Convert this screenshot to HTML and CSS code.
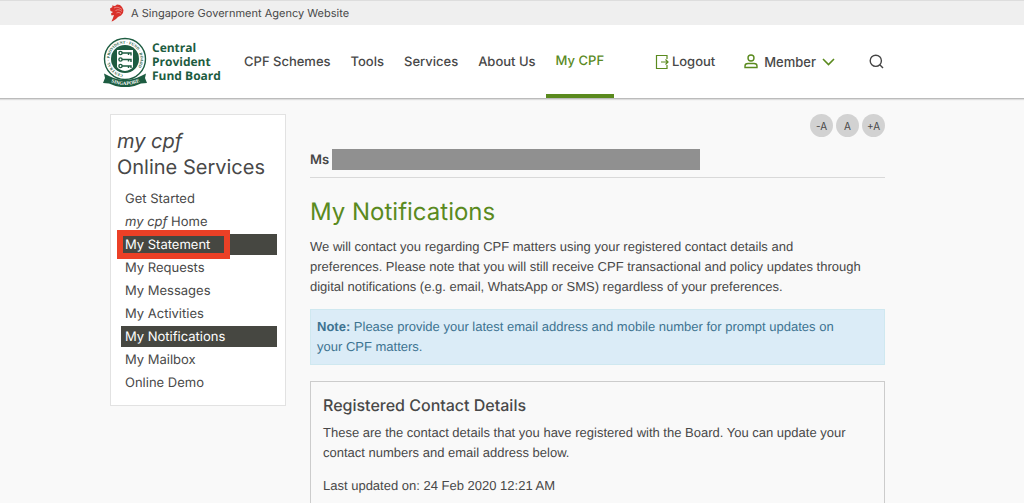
FILE: index.html
```html
<!DOCTYPE html>
<html lang="en">
<head>
  <meta charset="UTF-8" />
  <title>My Notifications</title>
  <meta name="viewport" content="width=device-width, initial-scale=1.0" />
  <link rel="stylesheet" href="styles.css">
</head>
<body>
  <div class="gov-bar">
    <svg class="lion" width="16" height="18" viewBox="0 0 16 18" aria-hidden="true">
      <path fill="#d9302a" d="M1 4.500 3.500 3 3 1.500 6 2 8 .5l3 .5 2 2 1.500 3-.5 3-2 2.500-3 1.500-2 2-3 2-1.500.5L4 14l1-3-2.500.5L2 9.500l2-1.500-2.500-1z" />
      <path fill="none" stroke="#f7cfcb" stroke-width=".5" d="M5 4c3-1.500 5-.5 8 1.500M6.500 6.500c3-1.500 4.500-.5 6.500 1M7.500 9c2-1 3-.5 4.500.5" />
    </svg>
    <span>A Singapore Government Agency Website</span>
  </div>

  <header class="header">
    <a href="#" class="logo">
      <svg width="44" height="50" viewBox="0 0 44 50" aria-hidden="true">
        <defs>
          <path id="ring" d="M20 37.400A15.500 15.500 0 1 1 24 37.400" />
          <path id="ribbon" d="M8 45Q22 51 36 45" />
        </defs>
        <circle cx="22" cy="22" r="20.500" fill="#fff" stroke="#1d5c41" stroke-width="1.400" />
        <circle cx="22" cy="22" r="14" fill="#1d5c41" />
        <path fill="#fff" d="M14 13h16v17q-2 3-8 4-6-1-8-4z" />
        <g fill="none" stroke="#1d5c41" stroke-width="1.400">
          <circle cx="17.500" cy="16" r="1.600" />
          <circle cx="17.500" cy="22.500" r="1.600" />
          <circle cx="17.500" cy="29" r="1.600" />
          <path d="M19 16h9v2.500M19 22.500h9V25M19 29h9v2M25.500 16v2M25.500 22.500v2M25.500 29v2" />
        </g>
        <text class="seal"><textPath href="#ring">CENTRAL · PROVIDENT · FUND · BOARD</textPath></text>
        <path fill="#1d5c41" d="M1 36.500l5 2.500q16 8 32 0l5-2.500-1 4.500 2 5-6 .5Q22 54 6 46.500L0 46l2-5z" />
        <text class="seal seal-name"><textPath href="#ribbon">SINGAPORE</textPath></text>
      </svg>
      <span>Central<br>Provident<br>Fund Board</span>
    </a>
    <nav class="nav">
      <a href="#">CPF Schemes</a>
      <a href="#">Tools</a>
      <a href="#">Services</a>
      <a href="#">About Us</a>
      <a href="#" class="current">My CPF</a>
    </nav>
    <div class="account">
      <a href="#" class="logout">
        <svg width="14" height="16" viewBox="0 0 14 16" fill="none" stroke="#5a8a1e" stroke-width="1.200" aria-hidden="true">
          <path d="M12 5V1.500H1.500v13H12V11M6 8h7M10.500 5.500 13 8l-2.500 2.500" />
        </svg>
        Logout
      </a>
      <button class="member">
        <svg width="14" height="15" viewBox="0 0 14 15" fill="none" stroke="#5a8a1e" stroke-width="1.400" aria-hidden="true">
          <circle cx="7" cy="4" r="3" />
          <path d="M1 13.500v-1.500q0-2.500 3-2.500h6q3 0 3 2.500v1.500z" />
        </svg>
        Member
        <svg class="chevron" width="13" height="8" viewBox="0 0 13 8" fill="none" stroke="#5a8a1e" stroke-width="1.600" aria-hidden="true">
          <path d="M1 1l5.500 5.500L12 1" />
        </svg>
      </button>
      <button class="search" aria-label="Search">
        <svg width="15" height="15" viewBox="0 0 15 15" fill="none" stroke="#444" stroke-width="1.400" aria-hidden="true">
          <circle cx="6.800" cy="6.800" r="5.600" />
          <path d="M10.800 10.800l3.200 3.200" />
        </svg>
      </button>
    </div>
  </header>

  <div class="page">
    <aside class="sidebar">
      <h2><em>my cpf</em><br>Online Services</h2>
      <ul class="menu">
        <li><a href="#">Get Started</a></li>
        <li><a href="#"><em>my cpf</em> Home</a></li>
        <li class="marked"><a href="#" class="active">My Statement</a></li>
        <li><a href="#">My Requests</a></li>
        <li><a href="#">My Messages</a></li>
        <li><a href="#">My Activities</a></li>
        <li><a href="#" class="active">My Notifications</a></li>
        <li><a href="#">My Mailbox</a></li>
        <li><a href="#">Online Demo</a></li>
      </ul>
    </aside>

    <main class="content">
      <div class="text-size">
        <button>-A</button>
        <button>A</button>
        <button>+A</button>
      </div>
      <div class="user">
        <span>Ms</span>
        <span class="redacted"></span>
      </div>
      <h1>My Notifications</h1>
      <p>We will contact you regarding CPF matters using your registered contact details and<br>preferences. Please note that you will still receive CPF transactional and policy updates through<br>digital notifications (e.g. email, WhatsApp or SMS) regardless of your preferences.</p>
      <div class="note"><strong>Note:</strong> Please provide your latest email address and mobile number for prompt updates on<br>your CPF matters.</div>
      <section class="panel">
        <h3>Registered Contact Details</h3>
        <p>These are the contact details that you have registered with the Board. You can update your<br>contact numbers and email address below.</p>
        <p class="updated">Last updated on: 24 Feb 2020 12:21 AM</p>
      </section>
    </main>
  </div>
</body>
</html>
```
FILE: styles.css
```css
*,
*::after {
  box-sizing: border-box;
}
body {
  margin: 0;
  font-family: Inter, "Liberation Sans", sans-serif;
  font-size: 13px;
  line-height: 20px;
  text-rendering: geometricPrecision;
  color: #484848;
  background: #f9f9f9;
}
a {
  color: inherit;
  text-decoration: none;
}
button {
  padding: 0;
  border: none;
  background: none;
  font: inherit;
  color: inherit;
  cursor: pointer;
}
.gov-bar {
  display: flex;
  align-items: center;
  gap: 6px;
  height: 25px;
  padding-left: 109px;
  border-top: 1px solid #ddd;
  background: #efefef;
  font-size: 11px;
}
.header {
  display: flex;
  height: 74px;
  padding: 0 140px 0 103px;
  border-bottom: 1px solid #bbb;
  box-shadow: 0 1px 1px #ddd;
  background: #fff;
  font-weight: 500;
}
.logo {
  display: flex;
  align-items: center;
  gap: 5px;
  width: 131px;
  font-family: "Open Sans", sans-serif;
  font-size: 12px;
  font-weight: 700;
  line-height: 14px;
  color: #1d5c41;
}
.seal {
  font-family: "Liberation Serif", serif;
  font-size: 4px;
  font-weight: 700;
  fill: #1d5c41;
}
.seal-name {
  font-size: 5px;
  fill: #fff;
}
.nav {
  display: flex;
}
.nav a {
  padding: 0 10px;
  line-height: 74px;
}
.nav .current {
  line-height: 72px;
  color: #5a8a1e;
  border-bottom: 4px solid #5a8a1e;
}
.account {
  display: flex;
  flex: 1;
  align-items: center;
  justify-content: flex-end;
}
.logout,
.member {
  display: flex;
  align-items: center;
  gap: 3px;
  margin-right: 29px;
}
.member {
  gap: 6px;
  margin-right: 34px;
}
.search {
  display: flex;
}
.page {
  display: grid;
  grid-template-columns: 176px 1fr;
  gap: 24px;
  align-items: start;
  padding: 15px 139px 0 110px;
}
.sidebar {
  padding: 13px 8px 12px 6px;
  border: 1px solid #e2e2e2;
  background: #fff;
}
.sidebar h2 {
  margin: 0 0 8px;
  font-size: 20px;
  font-weight: 400;
  line-height: 26px;
}
.menu {
  display: grid;
  gap: 2px;
  margin: 0;
  padding: 0 0 0 4px;
  list-style: none;
}
.menu a {
  display: block;
  padding: 1px 0 0 4px;
  line-height: 20px;
}
.menu .active {
  color: #fff;
  background: #464741;
}
.marked {
  position: relative;
}
/* red frame over the highlighted entry */
.marked::after {
  content: "";
  position: absolute;
  top: -4px;
  left: -4px;
  width: 113px;
  height: 29px;
  border: 6px solid #eb4026;
}
.text-size {
  display: flex;
  justify-content: flex-end;
  gap: 3px;
}
.text-size button {
  width: 23px;
  height: 23px;
  border-radius: 50%;
  background: #d2d2d2;
  font-size: 10px;
}
.user {
  display: flex;
  align-items: center;
  gap: 3px;
  margin-top: 12px;
  padding-bottom: 7px;
  border-bottom: 1px solid #d9d9d9;
  font-weight: 600;
}
.redacted {
  width: 64%;
  height: 21px;
  background: #909090;
}
h1 {
  margin: 18px 0 9px;
  font-size: 24px;
  font-weight: 400;
  line-height: 32px;
  color: #5a8a1e;
}
p {
  margin: 0;
}
p,
.note {
  font-family: "Liberation Sans", sans-serif;
}
.note {
  margin: 12px 0 16px;
  padding: 7px 6px;
  border: 1px solid #cfe8f0;
  background: #dbecf7;
  color: #3d7391;
}
.panel {
  padding: 11px 12px 16px;
  border: 1px solid #ccc;
}
.panel h3 {
  margin: 0 0 6px;
  font-size: 16px;
  font-weight: 500;
  line-height: 24px;
}
.updated {
  margin-top: 13px;
}
```
